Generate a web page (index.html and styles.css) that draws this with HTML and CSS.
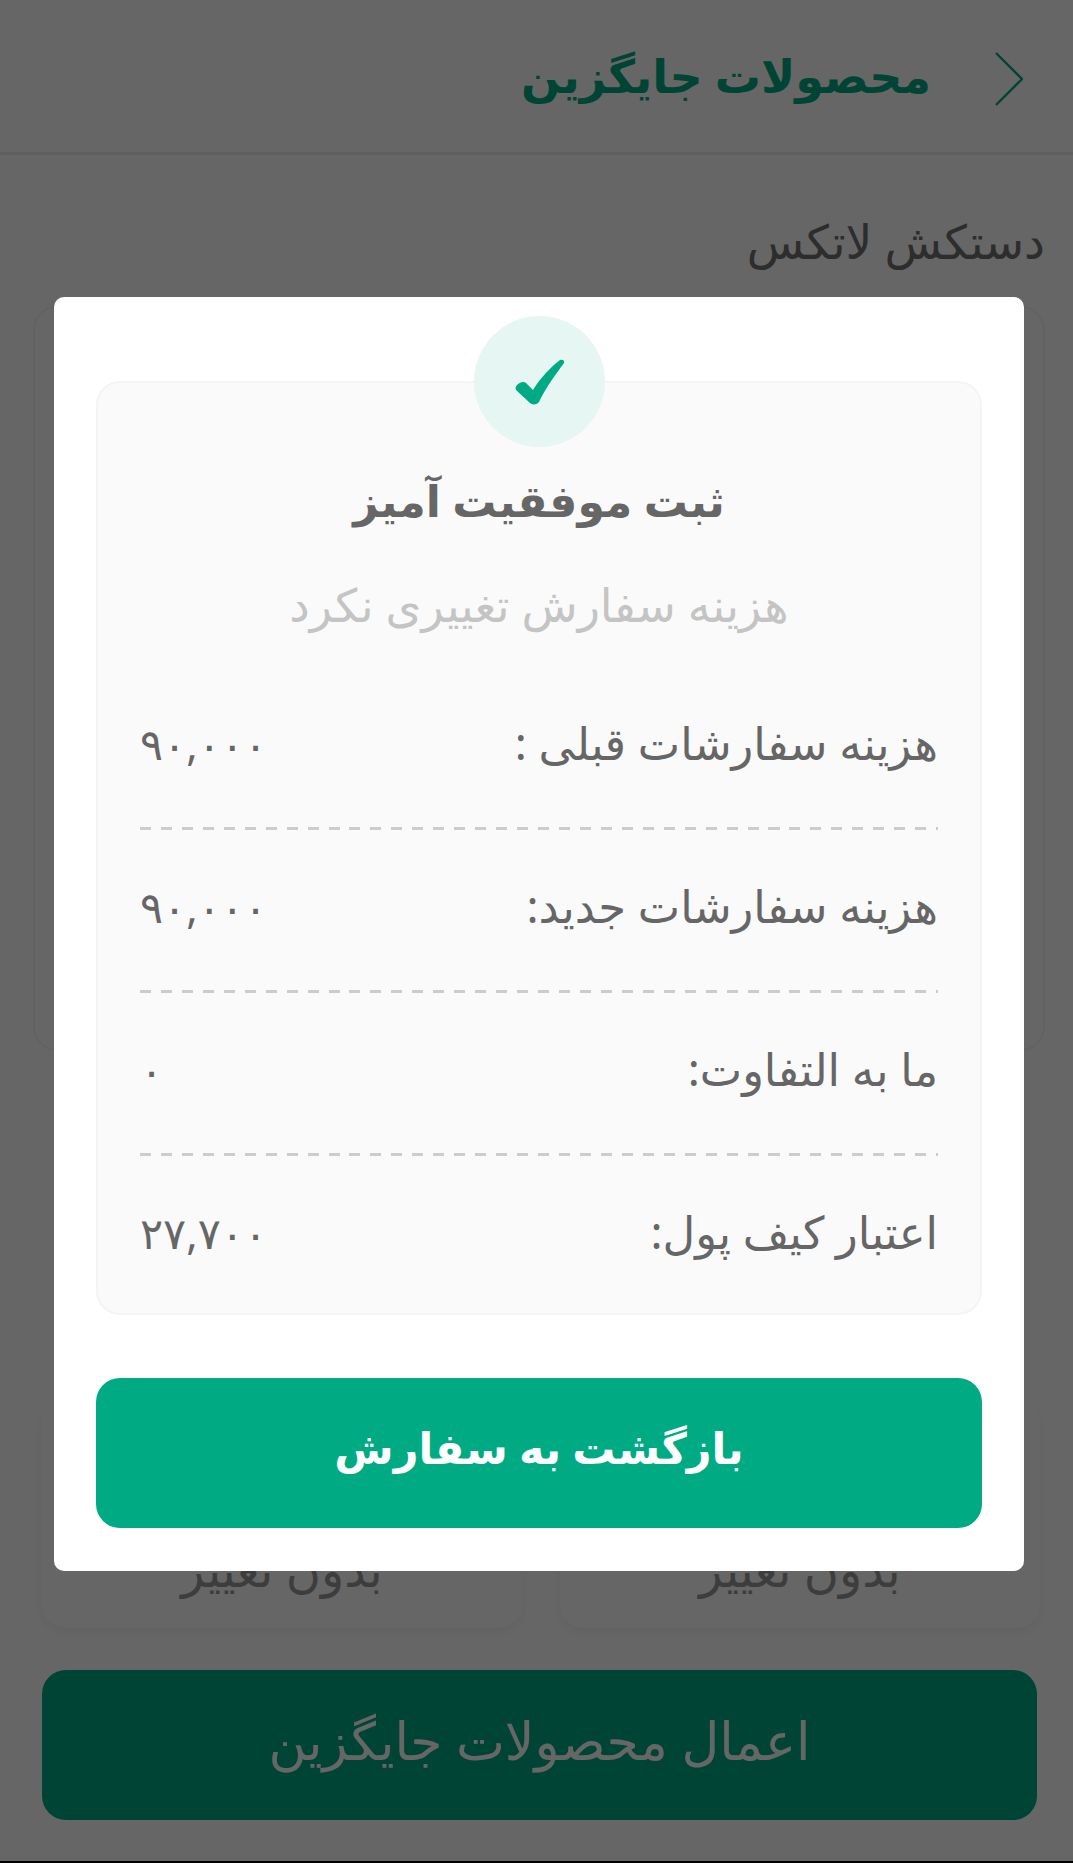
FILE: index.html
```html
<!DOCTYPE html>
<html lang="fa" dir="rtl">

<head>
    <meta charset="UTF-8">
    <meta name="viewport" content="width=device-width, initial-scale=1.0">
    <title>محصولات جایگزین</title>
    <link rel="stylesheet" href="styles.css">
</head>

<body>
    <!-- Page behind the dialog -->
    <div class="page">
        <header class="topbar">
            <svg class="back-icon" viewBox="0 0 28 54" width="28" height="54">
                <path d="M1 1 L27 27 L1 53" fill="none" stroke="#00ab84" stroke-width="2.4" />
            </svg>
            <h1 class="topbar-title">محصولات جایگزین</h1>
        </header>

        <h2 class="product-name">دستکش لاتکس</h2>
        <div class="product-card"></div>

        <div class="options">
            <div class="option-card">بدون تغییر</div>
            <div class="option-card">بدون تغییر</div>
        </div>

        <button class="apply-btn">اعمال محصولات جایگزین</button>
    </div>

    <!-- Success dialog -->
    <div class="overlay">
        <div class="modal">
            <div class="summary">
                <div class="check-circle">
                    <svg class="check-icon" viewBox="0 0 50 46" width="50" height="46">
                        <path d="M2 26 C5 23 9 22 11 24 L18 31 C26 18 36 8 45 1 C47 0 50 1 49 4 C41 15 31 28 24 43 C22 46 17 46 15 44 L1 31 C0 29 1 27 2 26 Z" fill="#00ab84" />
                    </svg>
                </div>
                <h3 class="summary-title">ثبت موفقیت آمیز</h3>
                <p class="summary-sub">هزینه سفارش تغییری نکرد</p>

                <div class="row">
                    <span>هزینه سفارشات قبلی :</span>
                    <span class="row-value">۹۰,۰۰۰</span>
                </div>
                <div class="row">
                    <span>هزینه سفارشات جدید:</span>
                    <span class="row-value">۹۰,۰۰۰</span>
                </div>
                <div class="row">
                    <span>ما به التفاوت:</span>
                    <span class="row-value">۰</span>
                </div>
                <div class="row">
                    <span>اعتبار کیف پول:</span>
                    <span class="row-value">۲۷,۷۰۰</span>
                </div>
            </div>

            <button class="back-btn">بازگشت به سفارش</button>
        </div>
    </div>
</body>

</html>
```

FILE: styles.css
```css
* {
    box-sizing: border-box;
}

html,
body {
    margin: 0;
    padding: 0;
    height: 1863px;
    overflow: hidden;
    background-color: #fff;
}

body {
    font-family: "Noto Sans", "DejaVu Sans", sans-serif;
    position: relative;
}

.page {
    height: 1863px;
    border-bottom: 2px solid #000;
}

.topbar {
    height: 155px;
    padding: 6px 50px 0 0;
    display: flex;
    align-items: center;
    gap: 64px;
    border-bottom: 3px solid #eee;
}

.topbar-title {
    margin: 0 0 8px 0;
    font-size: 46px;
    font-weight: bold;
    color: #00ab84;
}

.product-name {
    margin: 0;
    padding: 54px 28px 0 0;
    height: 151px;
    font-size: 47px;
    font-weight: normal;
    color: #707070;
}

.product-card {
    margin: 0 28px 0 33px;
    height: 745px;
    border: 2px solid #f6f6f6;
    border-radius: 24px;
}

.options {
    margin: 349px 33px 0 42px;
    height: 228px;
    display: flex;
    gap: 38px;
}

.option-card {
    flex: 1;
    padding-top: 136px;
    text-align: center;
    font-size: 48px;
    color: #999;
    border-radius: 24px;
    box-shadow: 0 4px 12px rgba(0, 0, 0, 0.05);
}

.apply-btn {
    display: block;
    margin: 42px 36px 0 36px;
    padding-bottom: 12px;
    width: 995px;
    height: 150px;
    border: none;
    border-radius: 24px;
    background-color: #00ab84;
    color: #fff;
    font-family: inherit;
    font-size: 52px;
}

.overlay {
    position: absolute;
    top: 0;
    right: 0;
    bottom: 0;
    left: 0;
    padding-top: 297px;
    background-color: rgba(0, 0, 0, 0.6);
}

.modal {
    margin: 0 49px 0 54px;
    height: 1274px;
    padding: 84px 42px 0 42px;
    background-color: #fff;
    border-radius: 10px;
}

.summary {
    position: relative;
    height: 934px;
    padding: 0 42px;
    background-color: #fafafa;
    border: 2px solid #f4f4f4;
    border-radius: 24px;
}

.check-circle {
    position: absolute;
    top: -67px;
    left: 50%;
    margin-left: -65px;
    width: 131px;
    height: 131px;
    border-radius: 50%;
    background-color: #e6f6f2;
    display: flex;
    align-items: center;
    justify-content: center;
}

.summary-title {
    margin: 0;
    padding-top: 87px;
    height: 190px;
    text-align: center;
    font-size: 44px;
    font-weight: bold;
    color: #666;
}

.summary-sub {
    margin: 0;
    height: 94px;
    text-align: center;
    font-size: 46px;
    color: #c4c4c4;
}

.row {
    height: 163px;
    padding-top: 45px;
    display: flex;
    justify-content: space-between;
    align-items: flex-start;
    font-size: 45px;
    color: #666;
    background-image: repeating-linear-gradient(to right, #ccc 0, #ccc 11px, transparent 11px, transparent 20.95px);
    background-position: bottom;
    background-size: 100% 3px;
    background-repeat: no-repeat;
}

.row:last-child {
    background-image: none;
}

.row-value {
    font-size: 43px;
    padding-top: 2px;
}

.back-btn {
    display: block;
    margin-top: 63px;
    padding-bottom: 12px;
    width: 100%;
    height: 150px;
    border: none;
    border-radius: 24px;
    background-color: #00ab84;
    color: #fff;
    font-family: inherit;
    font-size: 43px;
    font-weight: bold;
}
```
